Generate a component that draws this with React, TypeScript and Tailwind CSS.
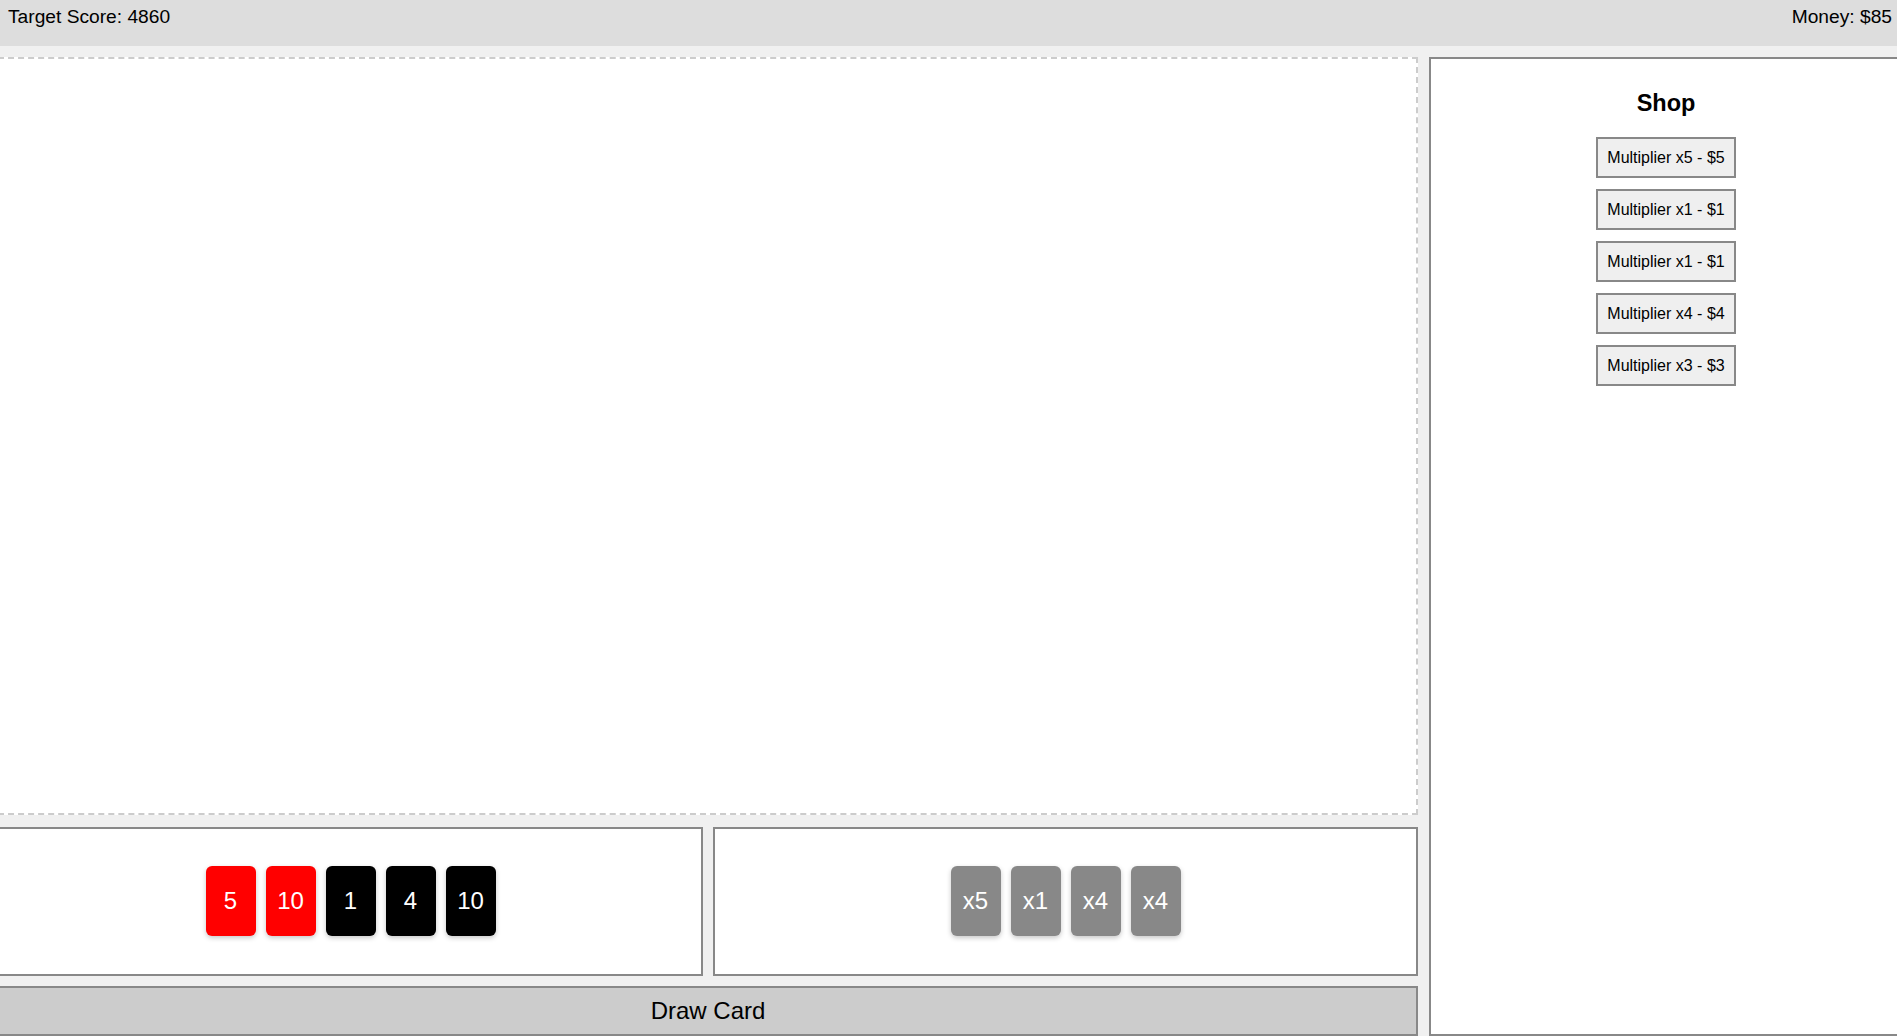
import React from "react";

const handCards = [
  { v: "5", c: "bg-[#ff0000]" },
  { v: "10", c: "bg-[#ff0000]" },
  { v: "1", c: "bg-black" },
  { v: "4", c: "bg-black" },
  { v: "10", c: "bg-black" },
];

const multCards = ["x5", "x1", "x4", "x4"];

const shopItems = [
  "Multiplier x5 - $5",
  "Multiplier x1 - $1",
  "Multiplier x1 - $1",
  "Multiplier x4 - $4",
  "Multiplier x3 - $3",
];

function Card({ label, color }: { label: string; color: string }) {
  return (
    <div
      className={`${color} w-[50px] h-[70px] rounded-[6px] flex items-center justify-center text-white text-[24px] shadow-[0_2px_5px_rgba(0,0,0,0.22)]`}
    >
      {label}
    </div>
  );
}

export default function App() {
  return (
    <div className="w-[1897px] h-[1036px] overflow-hidden bg-[#f0f0f0] font-['Liberation_Sans',Arial,sans-serif] text-black">
      <div className="w-[1905px] ml-[-2px] flex flex-col">
        <header className="h-[46px] bg-[#dddddd] flex items-start justify-between pl-[10px] pr-[11px] pt-[6px] text-[19.2px] leading-[22px]">
          <span>Target Score: 4860</span>
          <span>Money: $85</span>
        </header>
        <div className="flex mt-[11px] h-[979px]">
          <div className="w-[1420px] flex flex-col">
            <div className="h-[758px] bg-white border-2 border-dashed border-[#cccccc]" />
            <div className="h-[149px] mt-[12px] flex gap-[10px]">
              <div className="w-[705px] bg-white border-2 border-[#888888] flex items-center justify-center gap-[10px] pb-[1px]">
                {handCards.map((c, i) => (
                  <Card key={i} label={c.v} color={c.c} />
                ))}
              </div>
              <div className="flex-1 bg-white border-2 border-[#888888] flex items-center justify-center gap-[10px] pb-[1px]">
                {multCards.map((m, i) => (
                  <Card key={i} label={m} color="bg-[#888888]" />
                ))}
              </div>
            </div>
            <button className="h-[50px] mt-[10px] bg-[#cccccc] border-2 border-[#888888] text-[24px] text-black flex items-center justify-center">
              Draw Card
            </button>
          </div>
          <div className="w-[474px] ml-[11px] bg-white border-2 border-[#888888] flex flex-col items-center pt-[31px]">
            <h3 className="text-[23.5px] font-bold leading-[27px]">Shop</h3>
            <div className="mt-[20px] flex flex-col items-center gap-[11px]">
              {shopItems.map((s, i) => (
                <button
                  key={i}
                  className="h-[41px] px-[9px] bg-[#efefef] border-2 border-[#888888] text-[16px] text-black leading-[18px]"
                >
                  {s}
                </button>
              ))}
            </div>
          </div>
        </div>
      </div>
    </div>
  );
}
